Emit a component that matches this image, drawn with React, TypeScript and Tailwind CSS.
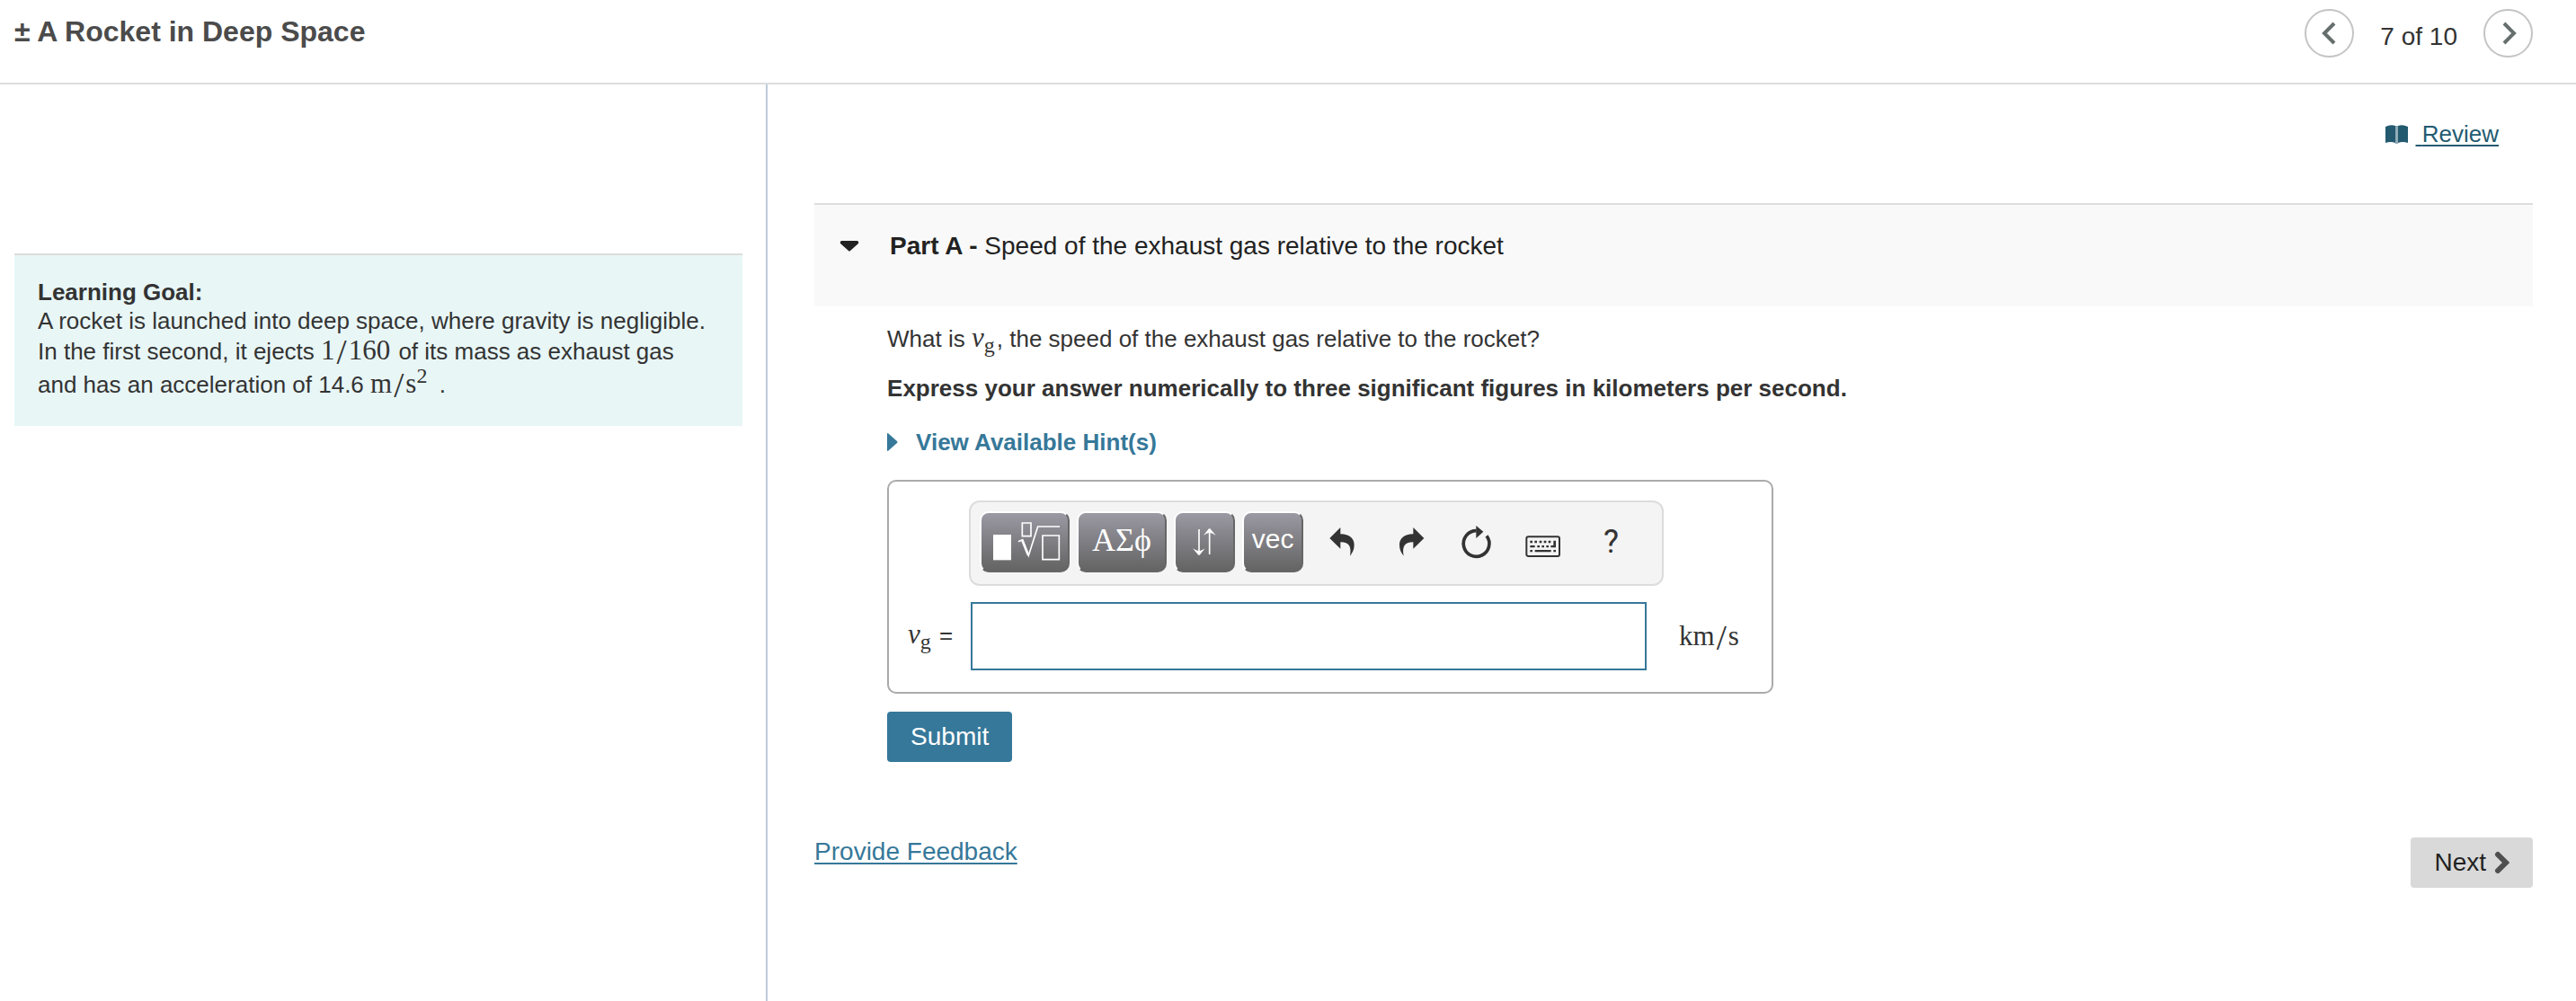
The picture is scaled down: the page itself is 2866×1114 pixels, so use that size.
import { useState, type ReactNode } from 'react';

function Slash() {
  return <span className="px-0.5 text-[40px] leading-4 align-[-5px]">/</span>;
}

function MathText({ children }: { children: ReactNode }) {
  return <span className="font-['Liberation_Serif',serif] text-[31px] leading-none">{children}</span>;
}

function Velocity() {
  return (
    <MathText>
      <i>v</i>
      <sub className="pr-0.5 text-[24px] leading-none align-[-6px] bottom-0">g</sub>
    </MathText>
  );
}

interface PaletteButtonProps {
  label: string;
  wide?: boolean;
  children: ReactNode;
}

function PaletteButton({ label, wide, children }: PaletteButtonProps) {
  return (
    <button
      aria-label={label}
      className={`${wide ? 'w-25' : 'w-17'} h-17 flex items-center justify-center text-white rounded-[10px] border-2 border-t-white border-l-white border-r-[#666] border-b-[#666] bg-linear-to-b from-[#9b99a3] to-[#646464]`}
    >
      {children}
    </button>
  );
}

function ToolButton({ label, children }: { label: string; children: ReactNode }) {
  return (
    <button aria-label={label} className="w-[75px] h-17 flex items-center justify-center text-[#333]">
      {children}
    </button>
  );
}

function Header() {
  return (
    <header className="flex justify-between items-start h-[94px] pl-4 pr-12 border-b-2 border-[#ddd]">
      <h1 className="pt-4 text-[32px] leading-[38px] font-bold text-[#4b4b4b]">± A Rocket in Deep Space</h1>
      <nav className="flex items-center pt-2.5">
        <button aria-label="Previous item" className="w-[55px] h-[54px] rounded-full border-2 border-[#c4c4c4] flex items-center justify-center">
          <svg width="20" height="28" viewBox="0 0 20 28" fill="none" stroke="#666e6e" strokeWidth="4">
            <path d="M15 3 4 14l11 11" />
          </svg>
        </button>
        <span className="px-[29px] pt-2 text-[28px] leading-8">7 of 10</span>
        <button aria-label="Next item" className="w-[55px] h-[54px] rounded-full border-2 border-[#c4c4c4] flex items-center justify-center">
          <svg width="20" height="28" viewBox="0 0 20 28" fill="none" stroke="#666e6e" strokeWidth="4">
            <path d="m5 3 11 11L5 25" />
          </svg>
        </button>
      </nav>
    </header>
  );
}

function LearningGoal() {
  return (
    <aside className="w-[29.8%] shrink-0 pl-4 pr-[26px] pt-[188px] border-r-2 border-[#bccbdb]">
      <div className="h-48 pl-[26px] pr-[34px] pt-[25px] border-t-2 border-[#ddd] bg-[#e8f6f6] text-[26px]">
        <h2 className="font-bold leading-8">Learning Goal:</h2>
        <p className="leading-[33px]">
          A rocket is launched into deep space, where gravity is negligible. In the first second, it ejects{' '}
          <MathText>1<Slash /><span className="pr-0.5">160</span></MathText> of its mass as exhaust gas and has an acceleration of 14.6{' '}
          <MathText>
            m<Slash />s<sup className="pr-1.5 text-[24px] leading-5 align-[11px] top-0">2</sup>
          </MathText>{' '}
          .
        </p>
      </div>
    </aside>
  );
}

function Toolbar() {
  return (
    <div className="col-span-2 flex w-[773px] pt-2.5 px-2.5 pb-[13px] rounded-xl border-2 border-[#dcdcdc] bg-[#f4f4f4]">
      <div className="flex gap-2 pr-[5px]">
        <PaletteButton label="Templates" wide>
          <svg width="80" height="48" viewBox="0 0 240 144" fill="none" stroke="white" strokeWidth="5">
            <path d="M15 48h60v85H15Z" fill="white" stroke="none" />
            <path d="M112 9h29v44h-29ZM180 51h55v80h-55Z" />
            <path d="m99 71 14-6 20 53 31-97h73" />
            <path d="m112 67 20 49" strokeWidth="8" />
          </svg>
        </PaletteButton>
        <PaletteButton label="Symbols" wide>
          <span className="pb-1 font-['Liberation_Serif','DejaVu_Serif',serif] text-[36px] leading-8">ΑΣϕ</span>
        </PaletteButton>
        <PaletteButton label="Arrows">
          <svg width="28" height="32" viewBox="0 0 84 96" fill="none" stroke="white" strokeWidth="5">
            <path d="M24 6v84M59 90V8" />
            <path d="M22 92 3 70q12 8 21 9q9-1 20-9L26 92ZM57 4 39 26q11-8 20-9q10 1 21 9L61 4Z" fill="white" stroke="none" />
          </svg>
        </PaletteButton>
        <PaletteButton label="Vector">
          <span className="pb-1.5 text-[30px] leading-8">vec</span>
        </PaletteButton>
      </div>
      <ToolButton label="Undo">
        <svg width="44" height="44" viewBox="0 0 132 132" fill="currentColor">
          <path d="M25 54 61 18V40C92 40 107 55 107 76C107 92 102 102 93 113C98 84 92 67 61 67V89Z" />
        </svg>
      </ToolButton>
      <ToolButton label="Redo">
        <svg width="44" height="44" viewBox="0 0 132 132" fill="currentColor">
          <path d="M115 54 79 18V40C48 40 33 55 33 76C33 92 38 102 47 113C42 84 48 67 79 67V89Z" />
        </svg>
      </ToolButton>
      <ToolButton label="Reset">
        <svg width="44" height="44" viewBox="0 0 132 132" fill="none" stroke="currentColor" strokeWidth="11">
          <path d="M99 46A43 43 0 1 1 65 29" />
          <path d="M64 12 88 32 64 54Z" fill="currentColor" stroke="none" />
        </svg>
      </ToolButton>
      <ToolButton label="Keyboard shortcuts">
        <svg width="44" height="44" viewBox="0 0 132 132" fill="currentColor">
          <rect x="7" y="49" width="110" height="65" rx="6" fill="none" stroke="currentColor" strokeWidth="6" />
          <path d="M19 62h8v8h-8ZM34 62h8v8h-8ZM50 62h8v8h-8ZM65 62h8v8h-8ZM80 62h8v8h-8ZM97 62h8v23H88v-7h9Z" />
          <path d="M19 78h16v7H19ZM43 78h8v7h-8ZM58 78h8v7h-8ZM73 78h8v7h-8Z" />
          <path d="M19 93h8v7h-8ZM35 93h54v7H35ZM97 93h8v7h-8Z" />
        </svg>
      </ToolButton>
      <ToolButton label="Help">
        <span className="font-[Roboto,sans-serif] text-[36px] leading-8">?</span>
      </ToolButton>
    </div>
  );
}

function AnswerForm() {
  const [answer, setAnswer] = useState('');

  return (
    <form onSubmit={(e) => e.preventDefault()}>
      <div className="mt-[26px] w-[986px] grid grid-cols-[68px_754px_auto] gap-y-[18px] items-center pl-[21px] pt-[21px] pb-6 rounded-[10px] border-2 border-[#aaa]">
        <span />
        <Toolbar />
        <label htmlFor="answer" className="text-[26px] leading-8">
          <Velocity /> =
        </label>
        <input
          id="answer"
          value={answer}
          onChange={(e) => setAnswer(e.target.value)}
          className="ml-0.5 h-19 px-3 text-[28px] border-2 border-[#367899] bg-white outline-none"
        />
        <span className="pl-9 leading-8">
          <MathText>km<Slash />s</MathText>
        </span>
      </div>
      <button type="submit" className="mt-5 h-14 px-[26px] rounded bg-[#367899] text-white text-[28px] leading-8">
        Submit
      </button>
    </form>
  );
}

export default function App() {
  return (
    <div className="min-h-screen flex flex-col bg-white text-[#333] font-['Liberation_Sans',Arial,sans-serif]">
      <Header />
      <div className="flex grow">
        <LearningGoal />
        <main className="grow pl-[52px] pr-12">
          <div className="flex justify-end items-center gap-[9px] pt-[39px] pr-[38px] text-[#235a70]">
            <svg width="25" height="21" viewBox="0 0 25 21" fill="currentColor">
              <path d="M0 2Q6-1 11 1V20Q6 18 0 20ZM14 1Q19-1 25 2V20Q19 18 14 20Z" />
              <path d="M11 1h3v20h-3Z" opacity="0.5" />
            </svg>
            <a href="#review" className="text-[26px] leading-8 underline decoration-2 underline-offset-3 whitespace-pre">
              {' '}Review
            </a>
          </div>

          <section>
            <div className="mt-[61px] flex pl-7 pt-[30px] pb-[51px] border-t-2 border-[#ddd] bg-[#f9f9f9] text-[#222]">
              <button aria-label="Collapse Part A" className="h-8 w-14">
                <svg width="22" height="12" viewBox="0 0 22 12" fill="currentColor">
                  <path d="M2 0h18q2 1 1 3L12 11q-1 1-2 0L1 3Q0 1 2 0Z" />
                </svg>
              </button>
              <h2 className="text-[28px] leading-8">
                <b>Part A - </b>Speed of the exhaust gas relative to the rocket
              </h2>
            </div>

            <div className="pl-[81px] pt-[19px] text-[26px] leading-8">
              <p className="h-8">
                What is <Velocity />, the speed of the exhaust gas relative to the rocket?
              </p>
              <p className="mt-6 font-bold">
                Express your answer numerically to three significant figures in kilometers per second.
              </p>
              <button className="mt-7 flex items-center gap-5 font-bold text-[#367899]">
                <svg width="12" height="20" viewBox="0 0 12 20" fill="currentColor">
                  <path d="M0 1Q0-1 2 1L11 9q1 1 0 2L2 19q-2 2-2 0Z" />
                </svg>
                View Available Hint(s)
              </button>
              <AnswerForm />
            </div>
          </section>

          <div className="mt-[84px] flex justify-between items-start text-[28px] leading-8">
            <a href="#feedback" className="text-[#367899] underline decoration-2 underline-offset-3">
              Provide Feedback
            </a>
            <button className="flex items-center gap-2 h-14 px-[26px] rounded bg-[#d9d9d9] text-[#222]">
              Next
              <svg width="18" height="26" viewBox="0 0 18 26" fill="none" stroke="#4f4f4f" strokeWidth="6" strokeLinecap="round">
                <path d="m5 4 9 9-9 9" />
              </svg>
            </button>
          </div>
        </main>
      </div>
    </div>
  );
}
